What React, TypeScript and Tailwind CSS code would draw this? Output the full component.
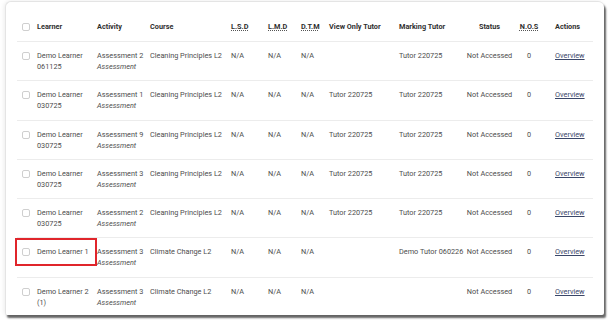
import React from 'react';

type Row = {
  learner: string[];
  activity: string;
  course: string;
  viewTutor: string;
  markingTutor: string;
  highlight?: boolean;
};

const rows: Row[] = [
  { learner: ['Demo Learner', '061125'], activity: 'Assessment 2', course: 'Cleaning Principles L2', viewTutor: '', markingTutor: 'Tutor 220725' },
  { learner: ['Demo Learner', '030725'], activity: 'Assessment 1', course: 'Cleaning Principles L2', viewTutor: 'Tutor 220725', markingTutor: 'Tutor 220725' },
  { learner: ['Demo Learner', '030725'], activity: 'Assessment 9', course: 'Cleaning Principles L2', viewTutor: 'Tutor 220725', markingTutor: 'Tutor 220725' },
  { learner: ['Demo Learner', '030725'], activity: 'Assessment 3', course: 'Cleaning Principles L2', viewTutor: 'Tutor 220725', markingTutor: 'Tutor 220725' },
  { learner: ['Demo Learner', '030725'], activity: 'Assessment 2', course: 'Cleaning Principles L2', viewTutor: 'Tutor 220725', markingTutor: 'Tutor 220725' },
  { learner: ['Demo Learner 1'], activity: 'Assessment 3', course: 'Climate Change L2', viewTutor: '', markingTutor: 'Demo Tutor 060226', highlight: true },
  { learner: ['Demo Learner 2', '(1)'], activity: 'Assessment 3', course: 'Climate Change L2', viewTutor: '', markingTutor: '' },
];

const cols = 'grid grid-cols-[16px_60px_53px_81px_37px_33px_28px_70px_69px_51px_28px_50px]';

const Checkbox = () => (
  <div className="ml-[5px] mt-[2px] w-[8px] h-[8px] rounded-[2px] border border-[#cfcfcf] bg-white" />
);

const Abbr = ({ children }: { children: React.ReactNode }) => (
  <span className="underline decoration-dotted decoration-[#555] underline-offset-[1px]">{children}</span>
);

export default function App() {
  return (
    <div className="w-[613px] h-[326px] bg-white pt-[1px] pl-[5px] font-['Roboto',sans-serif] text-[7.3px] leading-[11px]">
      <div className="w-[599px] h-[314px] bg-white rounded-tl-[6px] rounded-tr-[6px] rounded-b-[2px] border-l border-t border-[#e4e4e4] shadow-[2px_3px_2px_rgba(0,0,0,0.6),-1px_0_4px_rgba(0,0,0,0.08)] pl-[11px] pr-[11px]">
        {/* header */}
        <div className={`${cols} h-[39px] pt-[19px] font-bold text-[#2f2f2f] whitespace-nowrap`}>
          <div><Checkbox /></div>
          <div className="pl-[4px]">Learner</div>
          <div className="pl-[4px]">Activity</div>
          <div className="pl-[4px]">Course</div>
          <div className="pl-[4px]"><Abbr>L.S.D</Abbr></div>
          <div className="pl-[4px]"><Abbr>L.M.D</Abbr></div>
          <div className="pl-[4px]"><Abbr>D.T.M</Abbr></div>
          <div className="pl-[4px]">View Only Tutor</div>
          <div className="pl-[4px]">Marking Tutor</div>
          <div className="text-center">Status</div>
          <div className="text-center"><Abbr>N.O.S</Abbr></div>
          <div className="pl-[12px]">Actions</div>
        </div>
        {rows.map((r, i) => (
          <div
            key={i}
            className={`${cols} relative h-[39.3px] border-t border-[#ececec] pt-[8px] text-[#4d4d4d] whitespace-nowrap`}
          >
            {r.highlight && (
              <div className="absolute left-[-2px] top-0 w-[82px] h-[28px] border-2 border-[#e0252b]" />
            )}
            <div><Checkbox /></div>
            <div className="pl-[4px]">
              {r.learner.map((l) => (
                <div key={l}>{l}</div>
              ))}
            </div>
            <div className="pl-[4px]">
              <div>{r.activity}</div>
              <div className="italic">Assessment</div>
            </div>
            <div className="pl-[4px]">{r.course}</div>
            <div className="pl-[4px]">N/A</div>
            <div className="pl-[4px]">N/A</div>
            <div className="pl-[4px]">N/A</div>
            <div className="pl-[4px]">{r.viewTutor}</div>
            <div className="pl-[4px]">{r.markingTutor}</div>
            <div className="text-center">Not Accessed</div>
            <div className="text-center">0</div>
            <div className="pl-[12px]">
              <span className="underline text-[#3a4668]">Overview</span>
            </div>
          </div>
        ))}
      </div>
    </div>
  );
}
